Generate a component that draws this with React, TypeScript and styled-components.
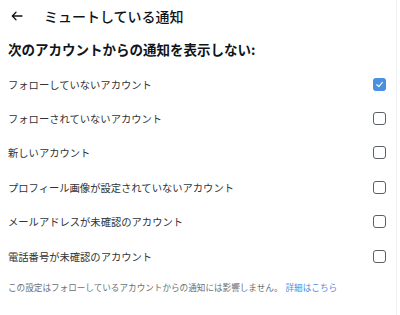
import React, { FC } from 'react';
import styled, { createGlobalStyle } from 'styled-components';

const GlobalStyle = createGlobalStyle`
  html, body {
    margin: 0;
    padding: 0;
    background: #ffffff;
  }
  body {
    font-family: 'Noto Sans CJK JP', 'Noto Sans', sans-serif;
    color: #0f1419;
  }
`;

const Panel = styled.div`
  width: 397px;
  height: 315px;
  box-sizing: border-box;
  border-right: 1px solid #eff1f2;
  display: flex;
  flex-direction: column;
`;

const Header = styled.div`
  height: 32px;
  display: flex;
  align-items: center;
  padding-left: 10px;
  gap: 20px;
`;

const BackArrow = styled.span`
  width: 14px;
  display: flex;
  align-items: center;
  justify-content: center;
`;

const Title = styled.h1`
  margin: 0;
  font-size: 14px;
  font-weight: 500;
  color: #0f1419;
`;

const SectionTitle = styled.h2`
  margin: 6px 0 0;
  padding: 0 8px;
  height: 20px;
  line-height: 22px;
  font-size: 13.5px;
  font-weight: 700;
  color: #0f1419;
`;

const List = styled.div`
  display: flex;
  flex-direction: column;
  margin-top: 9px;
`;

const Row = styled.label`
  height: 34.4px;
  display: flex;
  align-items: center;
  justify-content: space-between;
  padding: 0 10px 0 8px;
  font-size: 10.3px;
  color: #2f3336;
`;

const Box = styled.span<{ $checked: boolean }>`
  width: 13px;
  height: 13px;
  box-sizing: border-box;
  border-radius: 3px;
  border: ${(p) => (p.$checked ? 'none' : '1.5px solid #5b6166')};
  background: ${(p) => (p.$checked ? '#4a90e2' : '#ffffff')};
  display: flex;
  align-items: center;
  justify-content: center;
`;

const Note = styled.p`
  margin: 8px 0 0;
  padding: 0 8px;
  font-size: 8.6px;
  color: #6b7075;
`;

const Link = styled.a`
  color: #4a90e2;
  text-decoration: none;
  margin-left: 3px;
`;

const items: { label: string; checked: boolean }[] = [
  { label: 'フォローしていないアカウント', checked: true },
  { label: 'フォローされていないアカウント', checked: false },
  { label: '新しいアカウント', checked: false },
  { label: 'プロフィール画像が設定されていないアカウント', checked: false },
  { label: 'メールアドレスが未確認のアカウント', checked: false },
  { label: '電話番号が未確認のアカウント', checked: false },
];

const Checkbox: FC<{ checked: boolean }> = ({ checked }) => (
  <Box $checked={checked}>
    {checked && (
      <svg width="9" height="9" viewBox="0 0 10 10">
        <path d="M2 5.3 L4.2 7.4 L8.2 2.6" fill="none" stroke="#fff" strokeWidth="1.3" strokeLinecap="round" strokeLinejoin="round" />
      </svg>
    )}
  </Box>
);

const App: FC = () => (
  <>
    <GlobalStyle />
    <Panel>
      <Header>
        <BackArrow>
          <svg width="12" height="10" viewBox="0 0 12 10">
            <path d="M11 5 H1.5 M5 1.3 L1.3 5 L5 8.7" fill="none" stroke="#0f1419" strokeWidth="1.3" strokeLinecap="round" strokeLinejoin="round" />
          </svg>
        </BackArrow>
        <Title>ミュートしている通知</Title>
      </Header>
      <SectionTitle>次のアカウントからの通知を表示しない:</SectionTitle>
      <List>
        {items.map((it) => (
          <Row key={it.label}>
            <span>{it.label}</span>
            <Checkbox checked={it.checked} />
          </Row>
        ))}
      </List>
      <Note>
        この設定はフォローしているアカウントからの通知には影響しません。
        <Link href="#">詳細はこちら</Link>
      </Note>
    </Panel>
  </>
);

export default App;
